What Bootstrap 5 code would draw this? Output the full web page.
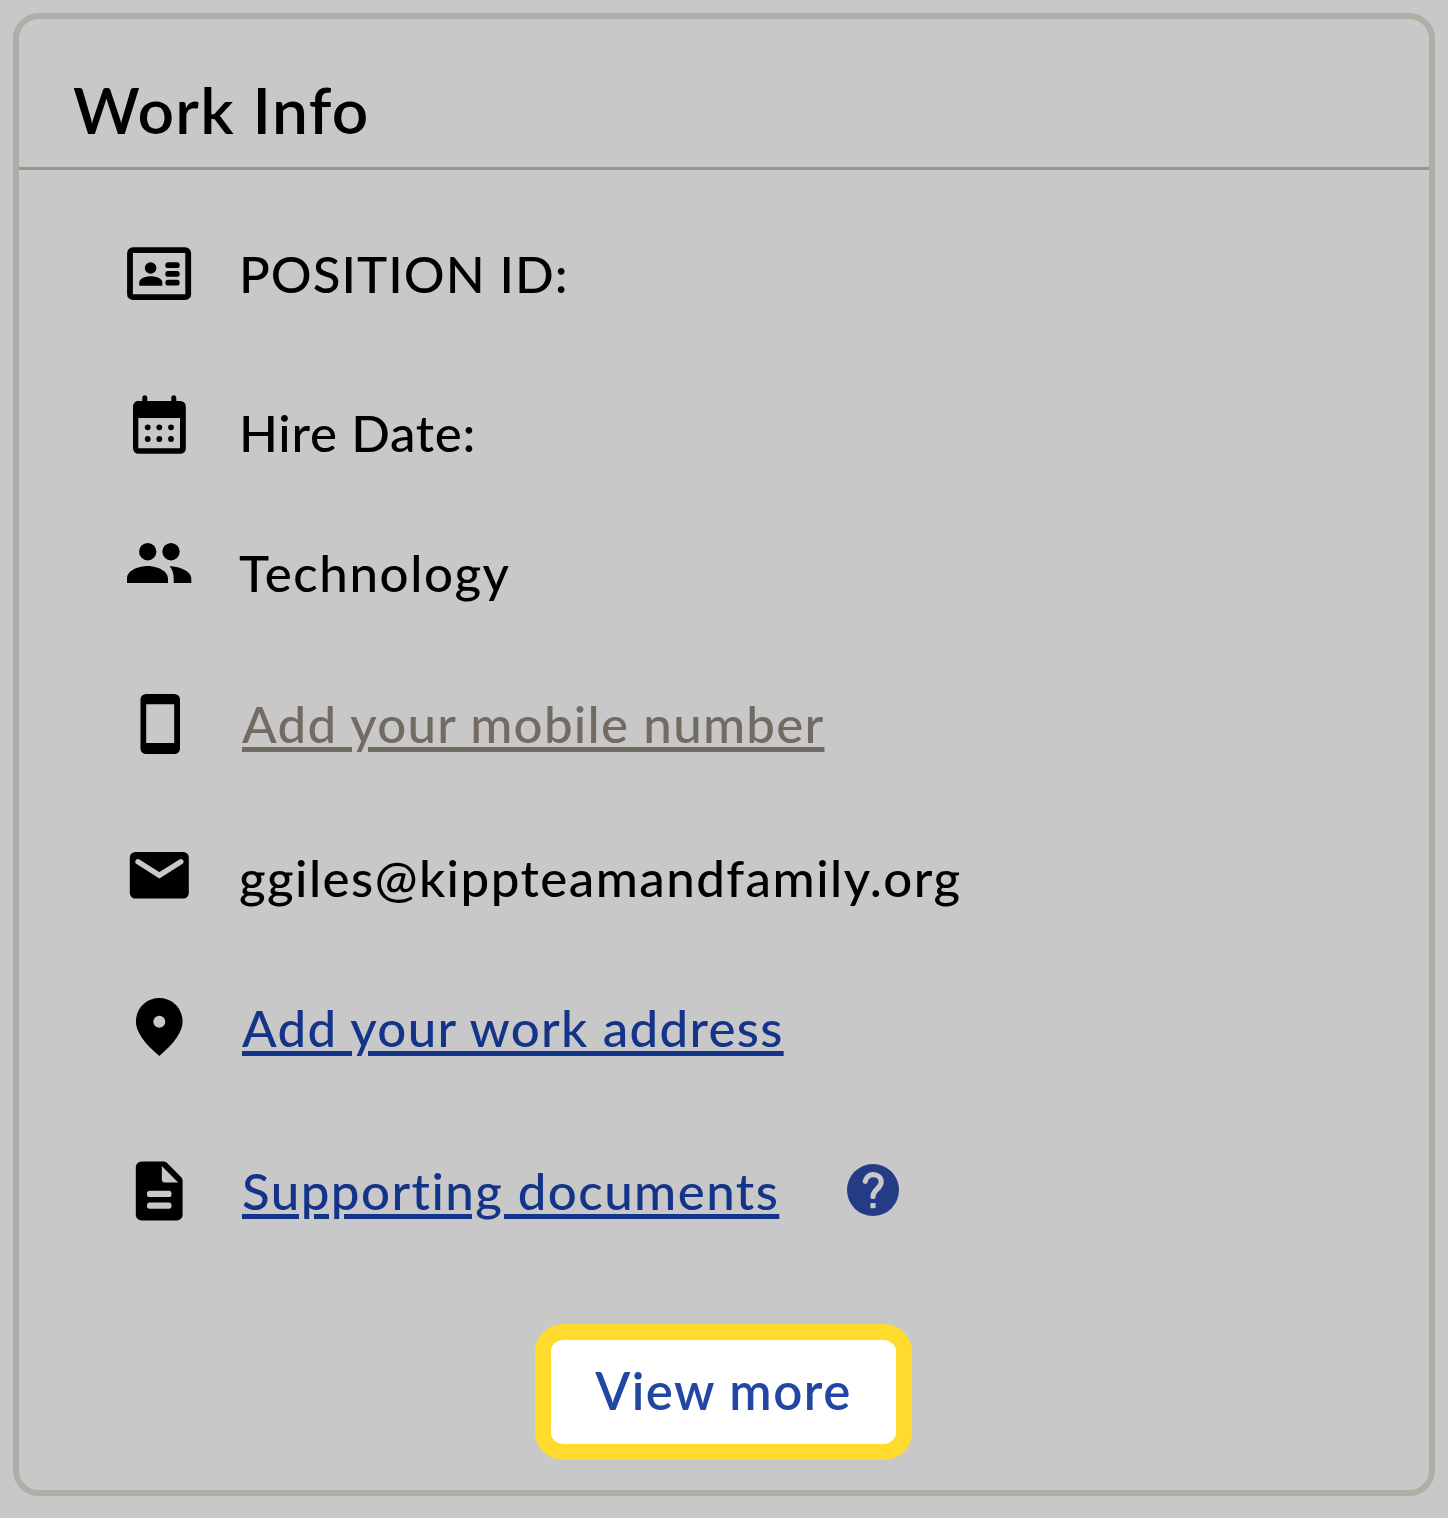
<!DOCTYPE html>
<html lang="en">
<head>
<meta charset="utf-8">
<meta name="viewport" content="width=device-width, initial-scale=1">
<title>Work Info</title>
<link href="https://cdn.jsdelivr.net/npm/bootstrap@5.3.0/dist/css/bootstrap.min.css" rel="stylesheet">
<style>
body{background:#c8c8c8;color:#000;font-family:Lato,"Liberation Sans",sans-serif;padding:13px 13px 0}
.info-panel{height:1483px;background:#c8c8c8;border:6px solid #b0aca6;border-radius:26px;color:#000}
.info-head{height:151px;background:none;border-bottom:3px solid #9a9791;padding:53px 0 0 54px}
.info-head h1{font-size:64px;font-weight:600;line-height:76px;letter-spacing:1.4px}
.info-body{padding:69px 0 0 105px}
.info-list{list-style:none}
.info-item{height:70px}
.info-icon{width:70px;height:70px;flex:none}
.info-label{font-size:51px;font-weight:500;line-height:60px;white-space:nowrap;margin-left:45px}
a.info-label{margin-left:48px;text-decoration:underline;text-decoration-thickness:4.5px;text-underline-offset:3.5px;color:#14348a}
a.info-muted{color:#716b64}
.help-btn{width:52px;height:52px;margin:8px 0 0 68px}
.more-btn{width:377px;height:136px;margin:98px 0 0 411px;border:16px solid #ffdb2d;border-radius:29px / 27px;background:#fff;color:#2146a4;font-size:51px;font-weight:600;line-height:60px;padding:0 0 2px;letter-spacing:1.5px}
.more-btn:hover{background:#fff;border-color:#ffdb2d;color:#2146a4}
.ls-id{letter-spacing:1px}.ls-date{letter-spacing:.7px}.ls-dept{letter-spacing:1.6px}.ls-phone{letter-spacing:1.26px}.ls-mail{letter-spacing:1.46px}.ls-addr{letter-spacing:1.3px}.ls-docs{letter-spacing:1.45px}
.gap-81{margin-bottom:81px}.gap-69{margin-bottom:69px}.gap-90{margin-bottom:90px}.gap-82{margin-bottom:82px}.gap-94{margin-bottom:94px}
.drop-5{margin-top:5px}.drop-6{margin-top:6px}.drop-8{margin-top:8px}.drop-13{margin-top:13px}.drop-14{margin-top:14px}
</style>
<script src="https://cdn.jsdelivr.net/npm/bootstrap@5.3.0/dist/js/bootstrap.bundle.min.js"></script>
</head>
<body>
<main class="card info-panel">
  <header class="card-header info-head"><h1 class="m-0">Work Info</h1></header>
  <div class="card-body info-body">
    <ul class="info-list m-0 p-0">
      <li class="info-item d-flex align-items-start gap-81">
        <svg class="info-icon" viewBox="0 0 70 70" aria-hidden="true"><rect x="6" y="11.2" width="58.2" height="47" rx="3" fill="none" stroke="#000" stroke-width="5.8"/><circle cx="26.6" cy="29" r="5.8"/><path d="M15.3 46.800v-3.600c0-3.800 7-5.900 11.500-5.900s11.500 2.100 11.500 5.900v3.600z"/><rect x="41.300" y="23.300" width="14.400" height="5.800" rx="2.900"/><rect x="41.300" y="32" width="14.400" height="5.800" rx="2.900"/><rect x="41.300" y="40.800" width="14.400" height="5.800" rx="2.900"/></svg>
        <span class="info-label drop-5 ls-id">POSITION ID:</span>
      </li>
      <li class="info-item d-flex align-items-start gap-69">
        <svg class="info-icon" viewBox="0 0 70 70" aria-hidden="true"><path fill-rule="evenodd" d="M14.500 11h3.800V7.800a2.500 2.500 0 0 1 5 0V11h24V7.800a2.500 2.500 0 0 1 5 0V11h4a5.500 5.500 0 0 1 5.500 5.500v42a5.300 5.300 0 0 1-5.300 5.300h-42a5.500 5.500 0 0 1-5.500-5.500v-42A5.300 5.300 0 0 1 14.500 11zM14.300 28v30.300H56V28z"/><circle cx="23.700" cy="37.300" r="2.900"/><circle cx="35.300" cy="37.300" r="2.900"/><circle cx="47" cy="37.300" r="2.900"/><circle cx="23.700" cy="49" r="2.900"/><circle cx="35.300" cy="49" r="2.900"/><circle cx="47" cy="49" r="2.900"/></svg>
        <span class="info-label drop-13 ls-date">Hire Date:</span>
      </li>
      <li class="info-item d-flex align-items-start gap-90">
        <svg class="info-icon" viewBox="0 0 70 70" aria-hidden="true"><circle cx="23.700" cy="22.700" r="8.700"/><circle cx="47" cy="22.700" r="8.700"/><path d="M3 54V49.500C3 41 15.500 37 23.500 37S44 41 44 49.500V54zM45.500 37.300C54 37.500 67.300 41.500 67.300 49.500V54H49.700V49.500C49.700 44.500 48.500 40.500 45.500 37.300z"/></svg>
        <span class="info-label drop-14 ls-dept">Technology</span>
      </li>
      <li class="info-item d-flex align-items-start gap-81">
        <svg class="info-icon" viewBox="0 0 70 70" aria-hidden="true"><path fill-rule="evenodd" d="M22 5h28.500a5.500 5.500 0 0 1 5.500 5.500v49a5.500 5.500 0 0 1-5.500 5.500H22a5.500 5.500 0 0 1-5.500-5.500v-49A5.500 5.500 0 0 1 22 5zM22.200 15.200V54h28V15.200z"/></svg>
        <a href="#" class="info-label info-muted drop-5 ls-phone">Add your mobile number</a>
      </li>
      <li class="info-item d-flex align-items-start gap-82">
        <svg class="info-icon" viewBox="0 0 70 70" aria-hidden="true"><rect x="5.800" y="12" width="59" height="46.500" rx="5.500"/><path d="M14 21.800 35.400 35.200 56.800 21.800" fill="none" stroke="#c8c8c8" stroke-width="5.400" stroke-linecap="round"/></svg>
        <span class="info-label drop-8 ls-mail">ggiles@kippteamandfamily.org</span>
      </li>
      <li class="info-item d-flex align-items-start gap-94">
        <svg class="info-icon" viewBox="0 0 70 70" aria-hidden="true"><path fill-rule="evenodd" d="M35.300 6C23 6 11.900 15.500 11.900 29.800 11.900 39.500 19.700 50.800 35.300 64 50.900 50.800 58.600 39.500 58.600 29.800 58.600 15.500 47.500 6 35.300 6zM35.300 23.800a6 6 0 1 1 0 12 6 6 0 0 1 0-12z"/></svg>
        <a href="#" class="info-label drop-6 ls-addr">Add your work address</a>
      </li>
      <li class="info-item d-flex align-items-start">
        <svg class="info-icon" viewBox="0 0 70 70" aria-hidden="true"><path d="M17.500 5.500h21.800c1.500 0 2.800.500 3.800 1.500L57 21c1 1 1.600 2.400 1.600 3.800v34a5.700 5.700 0 0 1-5.700 5.700H17.500a5.700 5.700 0 0 1-5.700-5.700V11.200a5.700 5.700 0 0 1 5.700-5.700z"/><path fill="#c8c8c8" d="M37.800 10v13.600a2.800 2.800 0 0 0 2.800 2.800H54.200z"/><rect x="23" y="34.700" width="24.500" height="6.400" rx="2.600" fill="#c8c8c8"/><rect x="23" y="46.500" width="24.500" height="6.200" rx="2.600" fill="#c8c8c8"/></svg>
        <a href="#" class="info-label drop-5 ls-docs">Supporting documents</a>
        <svg class="help-btn" viewBox="0 0 52 52" role="img" aria-label="Help"><circle cx="26" cy="26" r="26" fill="#243c85"/><path d="M18.300 17.300C19.100 13.400 22.200 10.700 26.200 10.700c4.600 0 8 3.100 8 7.200 0 6.600-8.200 7.400-8.200 14.600" fill="none" stroke="#c8c8c8" stroke-width="5.200" stroke-linecap="round"/><rect x="23.400" y="39" width="5.200" height="5.200" rx="1" fill="#c8c8c8"/></svg>
      </li>
    </ul>
    <button type="button" class="btn more-btn d-block">View more</button>
  </div>
</main>
</body>
</html>
